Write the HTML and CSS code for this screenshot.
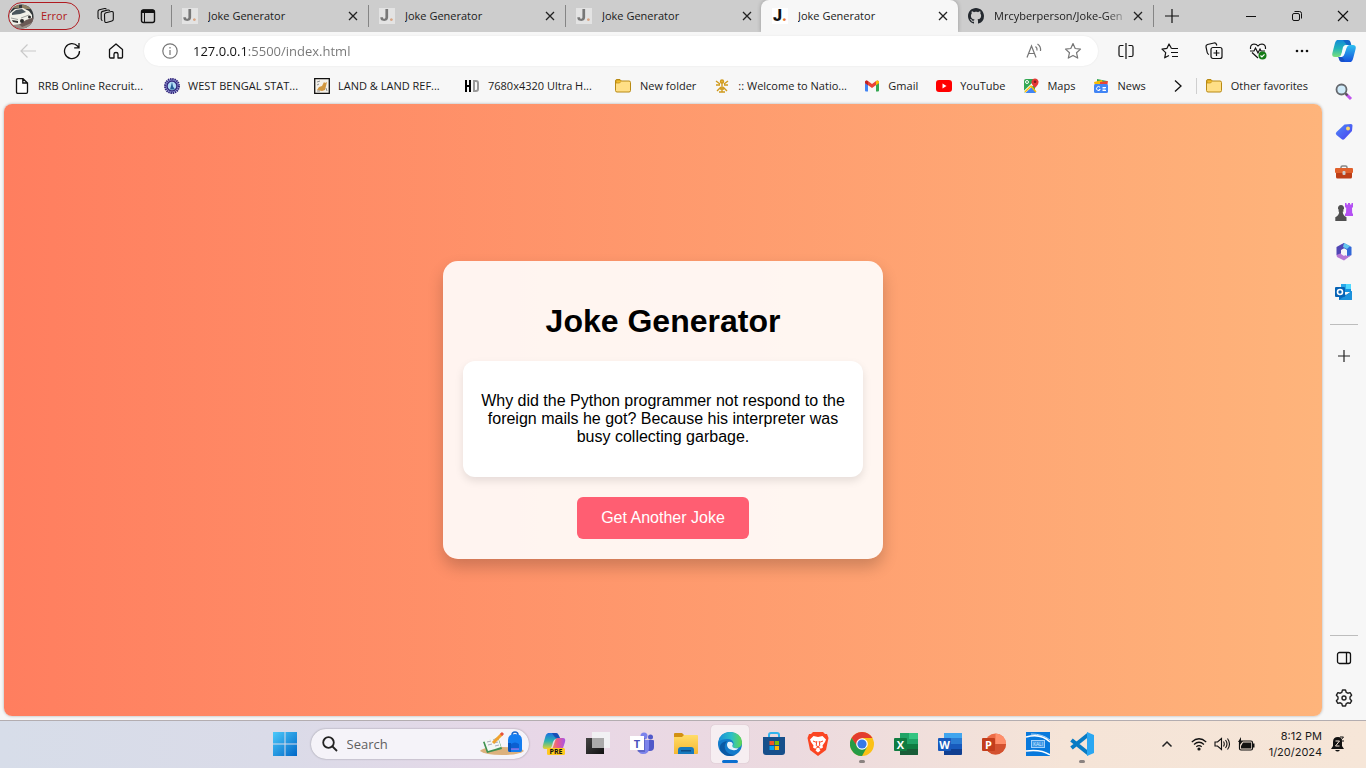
FILE: index.html
```html
<!DOCTYPE html>
<html lang="en">
<head>
<meta charset="utf-8">
<meta name="viewport" content="width=device-width, initial-scale=1">
<title>Joke Generator</title>
<link rel="stylesheet" href="styles.css">
</head>
<body class="desktop">
<svg class="defs" width="0" height="0" aria-hidden="true">
  <defs>
    <symbol id="close" viewBox="0 0 16 16"><path d="M4 4l8 8M12 4l-8 8" stroke="#222" stroke-width="1.3" fill="none"/></symbol>
    <symbol id="folder" viewBox="0 0 18 16"><path d="M1.500 3q0-1.500 1.500-1.500h3l1.500 1.500h7.500q1.500 0 1.500 1.500v8q0 1.500-1.500 1.500h-12q-1.500 0-1.500-1.500z" fill="#ffdf86" stroke="#b88a14"/><path d="M2 5V3q0-1 1-1h3l1 1.500L5.500 5z" fill="#f3bd2c" stroke="#b88a14" stroke-width=".7"/></symbol>
    <linearGradient id="gBlue" x1="0" y1="0" x2="1" y2="1"><stop stop-color="#4cc9fa"/><stop offset="1" stop-color="#0067c7"/></linearGradient>
    <linearGradient id="gCop1" x1="0" y1="0" x2="0" y2="1"><stop stop-color="#1389d8"/><stop offset=".5" stop-color="#21b4b8"/><stop offset="1" stop-color="#7be07a"/></linearGradient>
    <linearGradient id="gCop2" x1="0" y1="0" x2="0" y2="1"><stop stop-color="#2ec0f0"/><stop offset="1" stop-color="#1450dc"/></linearGradient>
    <linearGradient id="gTag" x1="0" y1="0" x2="1" y2="1"><stop stop-color="#4f8cf8"/><stop offset="1" stop-color="#4a3ff0"/></linearGradient>
    <linearGradient id="gEdge" x1="0" y1="0" x2="1" y2="0"><stop stop-color="#1a8fd8"/><stop offset=".55" stop-color="#2bbfc7"/><stop offset="1" stop-color="#62d84e"/></linearGradient>
    <linearGradient id="gPre" x1="0" y1="1" x2="1" y2="1"><stop stop-color="#f7a23b"/><stop offset=".5" stop-color="#ea5a8c"/><stop offset="1" stop-color="#a454e8"/></linearGradient>
    <linearGradient id="gPreL" x1="0" y1="0" x2="0" y2="1"><stop stop-color="#1c6fe0"/><stop offset=".5" stop-color="#2cb3b0"/><stop offset="1" stop-color="#e5d330"/></linearGradient>
    <linearGradient id="gFold" x1="0" y1="0" x2="0" y2="1"><stop stop-color="#ffdc68"/><stop offset="1" stop-color="#f5b731"/></linearGradient>
    <linearGradient id="gBlk" x1="0" y1="0" x2="1" y2="1"><stop stop-color="#444"/><stop offset="1" stop-color="#111"/></linearGradient>
  </defs>
</svg>

<header class="tabstrip">
  <div class="tabstrip-tools">
    <button class="profile"><svg width="25" height="25" viewBox="0 0 25 25" aria-hidden="true"><clipPath id="av"><circle cx="12.500" cy="12.500" r="12"/></clipPath><g clip-path="url(#av)"><path fill="#33383a" d="M0 0h25v25H0z"/><path fill="#8c8063" d="M3 0h7v4H3zM13 1h9v4h-9z"/><path fill="#9a8f88" d="M0 19l25-5v11H0z"/><path fill="#6b5a56" d="M9 19l16-6v5l-12 5z"/><path fill="#f1f1e9" d="M0 10l6-5 8-1 6 3 3 4v3l-6 2-6 4-7 1-4-4z"/><path fill="#4a565c" d="M3 9l4-3 6-1 4 3-6 2-8 1z"/><path d="M2 14l7 1.500M12 14l8-3" stroke="#9da19d" fill="none"/><path fill="#333" d="M3 16l6 1v2l-5-1z"/><circle cx="13" cy="17" r="2" fill="#2b2b2b"/><circle cx="20.500" cy="13" r="1.500" fill="#2b2b2b"/></g></svg>Error</button>
    <button class="tool" aria-label="Workspaces"><svg width="18" height="18" viewBox="0 0 18 18" fill="none" stroke="#111" stroke-width="1.100" stroke-linejoin="round"><path d="M7.500 7.500Q7.600 6 9 5.700l5.500-1.200q1.700-.3 1.800 1.500v6.200q0 1.400-1.400 1.800l-5.200 1.500q-1.900.4-2-1.500z"/><path d="M5.500 13.500q-1.300 0-1.300-1.500V6.200q0-1.400 1.400-1.800L11 3q1.300-.2 1.700.8"/><path d="M2.200 11.800Q1 11.600 1 10.200V4.600Q1 3.200 2.400 2.800L7.600 1.500Q9 1.200 9.300 2.300"/></svg></button>
    <button class="tool" aria-label="Tab actions"><svg width="16" height="16" viewBox="0 0 16 16"><rect x="1.500" y="2" width="13" height="12.500" rx="2" fill="none" stroke="#111" stroke-width="1.400"/><path d="M1.500 5V3.500q0-2 2-2h9q2 0 2 2V5z" fill="#111"/><path d="M4.500 5v9" stroke="#111"/></svg></button>
  </div>
  <div class="tab"><span class="favicon faded" aria-hidden="true">J<i>.</i></span><button class="tab-title">Joke Generator</button><button class="close" aria-label="Close tab"><svg width="16" height="16"><use href="#close"/></svg></button></div>
  <div class="tab"><span class="favicon faded" aria-hidden="true">J<i>.</i></span><button class="tab-title">Joke Generator</button><button class="close" aria-label="Close tab"><svg width="16" height="16"><use href="#close"/></svg></button></div>
  <div class="tab"><span class="favicon faded" aria-hidden="true">J<i>.</i></span><button class="tab-title">Joke Generator</button><button class="close" aria-label="Close tab"><svg width="16" height="16"><use href="#close"/></svg></button></div>
  <div class="tab active"><span class="favicon" aria-hidden="true">J<i>.</i></span><button class="tab-title">Joke Generator</button><button class="close" aria-label="Close tab"><svg width="16" height="16"><use href="#close"/></svg></button></div>
  <div class="tab last"><svg width="16" height="16" viewBox="0 0 16 16" aria-hidden="true"><path fill="#24292f" d="M8 0C3.580 0 0 3.580 0 8c0 3.540 2.290 6.530 5.470 7.590.4.070.550-.170.550-.380 0-.190-.010-.820-.010-1.490-2.010.370-2.530-.490-2.690-.940-.090-.230-.480-.940-.820-1.130-.280-.150-.680-.520-.010-.530.630-.010 1.080.580 1.230.820.720 1.210 1.870.870 2.330.660.070-.520.280-.870.510-1.070-1.780-.2-3.640-.890-3.640-3.950 0-.870.310-1.590.820-2.150-.080-.2-.360-1.020.080-2.120 0 0 .670-.210 2.200.820.640-.180 1.320-.270 2-.270s1.360.090 2 .270c1.530-1.040 2.200-.820 2.200-.820.440 1.100.160 1.920.080 2.120.510.560.820 1.270.820 2.150 0 3.070-1.870 3.750-3.650 3.950.290.250.540.730.540 1.480 0 1.070-.010 1.930-.010 2.200 0 .210.150.460.550.380A8.010 8.010 0 0 0 16 8c0-4.420-3.580-8-8-8z"/></svg><button class="tab-title fade">Mrcyberperson/Joke-Gen</button><button class="close" aria-label="Close tab"><svg width="16" height="16"><use href="#close"/></svg></button></div>
  <button class="newtab" aria-label="New tab"><svg width="16" height="16"><path d="M8 1v14M1 8h14" stroke="#111" stroke-width="1.200"/></svg></button>
  <div class="window-controls">
    <button aria-label="Minimize"><svg width="12" height="12"><path d="M1 6.500h10" stroke="#111"/></svg></button>
    <button aria-label="Restore"><svg width="12" height="12" fill="none" stroke="#111"><rect x="1.500" y="3.500" width="7" height="7" rx="1.500"/><path d="M3.500 1.500h5q2 0 2 2v5"/></svg></button>
    <button aria-label="Close window"><svg width="12" height="12"><path d="M1 1l10 10M11 1L1 11" stroke="#111" stroke-width="1.200"/></svg></button>
  </div>
</header>

<div class="toolbar">
  <div class="slots">
    <button class="slot" aria-label="Back"><svg width="18" height="18" fill="none" stroke="#c9c9c9" stroke-width="1.200"><path d="M17 9H2M8.500 2.500L2 9l6.500 6.500"/></svg></button>
    <button class="slot" aria-label="Refresh"><svg width="18" height="18" fill="none" stroke="#111" stroke-width="1.300"><path d="M16.500 9A7.500 7.500 0 1 1 14.500 4L16 5.800M16 1v4.800h-4.800"/></svg></button>
    <button class="slot" aria-label="Home"><svg width="16" height="18" fill="none" stroke="#111" stroke-width="1.300" stroke-linejoin="round"><path d="M1.500 7.500L8 2l6.500 5.500V15q0 1-1 1H10v-4q0-1.500-2-1.500T6 12v4H2.500q-1 0-1-1z"/></svg></button>
  </div>
  <div class="address">
    <svg width="16" height="16" fill="none" stroke="#777" stroke-width="1.200" aria-hidden="true"><circle cx="8" cy="8" r="7.200"/><path d="M8 7v5M8 4v1.500"/></svg>
    <input class="url" type="text" aria-label="Address" value="127.0.0.1:5500/index.html">
    <button class="inpill" aria-label="Read aloud"><svg width="16" height="16" fill="none" stroke="#777" stroke-width="1.200"><path d="M1 14.500L5.500 3 10 14.500M2.700 10.500h5.800M9.500 3.500q2 1.500 1.500 4M11.500 1q3.700 2.500 3 7"/></svg></button>
    <button class="inpill" aria-label="Favorite"><svg width="18" height="18" fill="none" stroke="#777" stroke-width="1.200" stroke-linejoin="round"><path d="M9 1.500l2.200 5 5.300.6-4 3.600 1.200 5.400L9 13.400l-4.700 2.700 1.200-5.400-4-3.600 5.300-.6z"/></svg></button>
  </div>
  <div class="slots">
    <button class="slot" aria-label="Split screen"><svg width="18" height="18" fill="none" stroke="#111" stroke-width="1.200"><path d="M6.500 3.500h-3Q2 3.500 2 5v8q0 1.500 1.500 1.500h3M11.500 3.500h3Q16 3.500 16 5v8q0 1.500-1.500 1.500h-3M9 1v16"/></svg></button>
    <button class="slot" aria-label="Favorites"><svg width="18" height="18" fill="none" stroke="#111" stroke-width="1.200" stroke-linejoin="round"><path d="M10.500 6.500L8 2 6 6.300l-5 .8 3.700 3.500-1 5.200L8 13.500M10.500 6.500H17M10 10.500h7M11 14.500h6"/></svg></button>
    <button class="slot" aria-label="Collections"><svg width="18" height="18" fill="none" stroke="#111" stroke-width="1.200"><rect x="6" y="5.500" width="11" height="11" rx="2"/><path d="M11.500 8v6M8.500 11h6M4 12.500Q2.500 12 2.200 10.500L1 5Q.7 3 2.500 2.500L9 1q2-.3 2.500 1.500l.3 1"/></svg></button>
    <button class="slot" aria-label="Browser essentials"><svg width="18" height="18" fill="none" stroke="#111" stroke-width="1.200"><path d="M1.500 7Q1 2.500 5 2q2.500 0 4 2 1.500-2 4-2 4 .5 3.500 5M1 9h4l1.500-3 2.500 5 2-4 1 2h4M3 10.500L9 16"/><circle cx="13.500" cy="13.500" r="4" fill="#157c16" stroke="none"/><path d="M11.500 13.500l1.400 1.400 2.600-2.600" stroke="#fff"/></svg></button>
    <button class="slot" aria-label="Settings and more"><svg width="16" height="6" fill="#111"><circle cx="3" cy="3" r="1.300"/><circle cx="8" cy="3" r="1.300"/><circle cx="13" cy="3" r="1.300"/></svg></button>
    <button class="slot copilot" aria-label="Copilot"><svg width="24" height="24" viewBox="0 0 24 24"><path fill="url(#gCop1)" d="M5 1h9q2 0 2.500 2l1 3h-3q-2 0-3 3l-2 6q-1 3-3 3H3q-3.500 0-2.600-4L3 4q.6-2 2-3z"/><path fill="#1267c9" d="M11 1h5q2 0 2.500 2l.8 3H16q-2 0-2.600-2z"/><path fill="url(#gCop2)" d="M19 23h-9q-2 0-2.500-2l-1-3h3q2 0 3-3l2-6q1-3 3-3H21q3.500 0 2.600 4L21 20q-.6 2-2 3z"/><path fill="#164fc3" d="M13 22.500H9Q7.500 22 7 20l-.7-2H9q2 0 2.600 2z"/><path fill="#f4fbff" d="M11 8q1-2 3-2h2q-1.500 1-2 3l-2 6q-1 3-3 3H8q1-1 1.500-3z"/></svg></button>
  </div>
</div>

<div class="browser-body">
  <main class="content">
    <nav class="bookmarks" aria-label="Favorites bar">
      <a class="bookmark long" href="#"><svg width="16" height="16" fill="#fff" stroke="#111" stroke-width="1.300"><path d="M2.500 2q0-1.300 1.300-1.300H9L13.500 5v9q0 1.300-1.300 1.300H3.800q-1.300 0-1.300-1.300zM8.800.8V5h4.500"/></svg><span>RRB Online Recruit...</span></a>
      <a class="bookmark long" href="#"><svg width="16" height="16"><circle cx="8" cy="8" r="7" fill="#a6b4ea" stroke="#33277d" stroke-width="2" stroke-dasharray="1.500 .7"/><circle cx="8" cy="8" r="5" fill="#b2dcf4" stroke="#33277d" stroke-width="1.500"/><path d="M8 4l-1 4-1 3.500h5L9 8.500z" fill="#245d98"/></svg><span>WEST BENGAL STAT...</span></a>
      <a class="bookmark long" href="#"><svg width="16" height="16"><path d="M.7.700h14.600v14.600H.7z" fill="#f4f1ea" stroke="#111" stroke-width="1.300"/><path d="M3 12l2-3 3-1 2-4 1 1 2-1-1 4-1 4-3 1z" fill="#d1973f"/><path d="M3 4l3-1M3 7l2-1M12 10l1 3M3 13h3" stroke="#8f8f8f"/></svg><span>LAND &amp; LAND REF...</span></a>
      <a class="bookmark long" href="#"><svg width="16" height="16" fill="none"><path d="M2 2v12M6 2v12M2 8h4" stroke="#000" stroke-width="2"/><path d="M10 3h2q2 0 2 2v6q0 2-2 2h-2z" stroke="#999" stroke-width="2"/></svg><span>7680x4320 Ultra H...</span></a>
      <a class="bookmark" href="#"><svg width="18" height="16"><use href="#folder"/></svg><span>New folder</span></a>
      <a class="bookmark long" href="#"><svg width="16" height="16" fill="none" stroke="#d09a1c" stroke-width="1.400"><path d="M8 5v9M2 3l4 3M14 3l-4 3M2 7h4M14 7h-4M3 13l4-4M13 13L9 9M5 14h6M6 11h4"/><circle cx="8" cy="3.500" r="1.500" fill="#edbd42"/></svg><span>:: Welcome to Natio...</span></a>
      <a class="bookmark" href="#"><svg width="16" height="16"><path fill="#4285f4" d="M1 4.500l3 2.500v6.500H2q-1 0-1-1z"/><path fill="#34a853" d="M15 4.500L12 7v6.500h2q1 0 1-1z"/><path fill="#ea4335" d="M1 5V4q.5-2.500 3-1l4 3 4-3q2.500-1.500 3 1v1L8 10z"/><path fill="#fbbc04" d="M12 3q2.500-1.500 3 1v1l-3 2.200z"/><path fill="#c5221f" d="M1 4q.5-2.500 3-1v4.200L1 5z"/></svg><span>Gmail</span></a>
      <a class="bookmark" href="#"><svg width="16" height="16"><rect y="2" width="16" height="12" rx="3" fill="#f00"/><path d="M6.500 5.500v5l4-2.500z" fill="#fff"/></svg><span>YouTube</span></a>
      <a class="bookmark" href="#"><svg width="16" height="16"><path fill="#34a853" d="M1 3q0-2 2-2h9v14H3q-2 0-2-2z"/><path fill="#4285f4" d="M2 14.500l6-6 5 6.500H3z"/><path d="M1.500 14L12 4" stroke="#fff" stroke-width="2.500"/><path d="M2 14l6-6 5 6" stroke="#fbbc04" stroke-width="1.500" fill="none"/><path fill="#e53935" d="M12 10Q8 6 8.500 3.500 9.200.500 12 .500t3.500 3Q16 6 12 10z"/><circle cx="12" cy="3.800" r="1.300" fill="#7b1c1c"/><circle cx="4" cy="4" r="1.500" fill="none" stroke="#fff"/></svg><span>Maps</span></a>
      <a class="bookmark" href="#"><svg width="16" height="16"><path fill="#34a853" d="M4 1l10 2v5H4z"/><path fill="#fbbc04" d="M1 4l8-2 2 6H2z"/><path fill="#ea4335" d="M7 4l8-1-1 6H7z"/><rect x="1" y="6" width="14" height="9" rx="1.500" fill="#4285f4"/><path d="M7 9.200a2 2 0 1 0 .3 2.300H5.800M9.500 9.500h3.500M9.500 11h3M9.500 12.500h3.500" stroke="#fff" fill="none"/></svg><span>News</span></a>
      <button class="more" aria-label="More favorites"><svg width="10" height="14" fill="none" stroke="#111" stroke-width="1.300"><path d="M2 1.500L8 7l-6 5.500"/></svg></button>
      <a class="bookmark other" href="#"><svg width="18" height="16"><use href="#folder"/></svg><span>Other favorites</span></a>
    </nav>
    <section class="page">
      <article class="card">
        <h1>Joke Generator</h1>
        <div class="joke"><p>Why did the Python programmer not respond to the foreign mails he got? Because his interpreter was busy collecting garbage.</p></div>
        <button class="another">Get Another Joke</button>
      </article>
    </section>
  </main>
  <aside class="sidebar">
    <button aria-label="Search"><svg width="18" height="18"><path d="M11 11l5 5" stroke="#c154ee" stroke-width="3"/><path d="M10 10l2.500 2.500" stroke="#555" stroke-width="2"/><circle cx="6.500" cy="6.500" r="5" fill="#cfeaf9" stroke="#66696e" stroke-width="1.800"/></svg></button>
    <button aria-label="Shopping"><svg width="18" height="18"><path d="M9.500 1.500L16 1q1.500 0 1.500 1.500L17 8l-7.500 8q-1.500 1.500-3 0L1.500 12q-1.500-1.500 0-3z" fill="url(#gTag)"/><circle cx="13" cy="5.500" r="2" fill="#f9d76b"/></svg></button>
    <button aria-label="Tools"><svg width="18" height="18"><path d="M6 6V4.500Q6 3 7.500 3h3Q12 3 12 4.500V6" fill="none" stroke="#858585" stroke-width="1.500"/><rect y="5" width="18" height="5" rx="1" fill="#e0602b"/><path d="M1 10h16v4q0 1.500-1.500 1.500h-13Q1 15.500 1 14z" fill="#bd3e16"/><rect x="7.500" y="8" width="3" height="4" rx="1" fill="#ccc"/></svg></button>
    <button aria-label="Games"><svg width="18" height="18"><path fill="#b450f3" d="M10 0h1.500v1.500H13V0h2v1.500h1.500V0H18v4l-1 1 .2 5 .8 1v2h-8v-2l1-1 .2-5-1.200-1z"/><path fill="#505050" d="M6 2a3 3 0 0 1 2 5.300l1 .8-1.300.7q.2 3.500 3.800 5.500V18H.3v-3.700Q4 12.500 4.200 8.800L3 8.100l1-.8A3 3 0 0 1 6 2z"/></svg></button>
    <button aria-label="Microsoft 365"><svg width="18" height="18"><path fill="#3169d8" d="M9 0l7.500 4v8L12 14.700V7L5 3z"/><path fill="#5146b4" d="M1.500 4L6 1.500 9 0l3 4-6 3v6L1.500 12z"/><path fill="#b777d5" d="M1.500 12l5-2 5.500 3 4.500-1L9 17.500 2 14z"/><path fill="#65c7ef" d="M9 0l6 3-3 3-4-2z"/><path fill="#f7f7f7" d="M9 5.500l3 2v3.500l-3 2-3-2V7.500z"/></svg></button>
    <button aria-label="Outlook"><svg width="18" height="18"><path fill="#1490df" d="M6 1h9q1 0 1 1v7H6z"/><path fill="#28a8ea" d="M6 1h5v5H6z"/><path fill="#50d9ff" d="M11 1h5v5h-5z"/><path fill="#0a6cbd" d="M4 8l7 4 6-4v8q0 1-1 1H4z"/><path fill="#1c91dc" d="M17 8v8q0 1-1 1H4z"/><rect y="4" width="10" height="10" rx="1" fill="#0663b5"/><circle cx="5" cy="9" r="2.500" fill="none" stroke="#fff" stroke-width="1.600"/></svg></button>
    <hr>
    <button aria-label="Customize"><svg width="14" height="14"><path d="M7 1v12M1 7h12" stroke="#222" stroke-width="1.200"/></svg></button>
    <hr class="push">
    <button aria-label="Hide sidebar"><svg width="16" height="16" fill="none" stroke="#111" stroke-width="1.300"><rect x="1.500" y="2.500" width="13" height="11" rx="2"/><path d="M10.500 2.500v11"/></svg></button>
    <button aria-label="Settings"><svg width="18" height="18" fill="none" stroke="#222" stroke-width="1.400" stroke-linejoin="round"><path d="M7.500 1h3l.7 2.300 1.600.9 2.300-.6 1.500 2.600L15 8v2l1.600 1.800-1.500 2.600-2.300-.6-1.600.9-.7 2.300h-3l-.7-2.300-1.600-.9-2.300.6-1.500-2.600L3 10V8L1.400 6.200l1.500-2.600 2.300.6 1.600-.9z"/><circle cx="9" cy="9" r="2"/></svg></button>
  </aside>
</div>

<footer class="taskbar">
  <div class="apps">
    <button class="app" aria-label="Start"><svg width="24" height="24" fill="url(#gBlue)"><path d="M0 0h11.500v11.500H0zM12.500 0H24v11.500H12.500zM0 12.500h11.500V24H0zM12.500 12.500H24V24H12.500z"/></svg></button>
    <div class="search">
      <svg width="16" height="16" fill="none" stroke="#222" stroke-width="1.800" aria-hidden="true"><circle cx="6.500" cy="6.500" r="5.300"/><path d="M10.500 10.500L15 15"/></svg>
      <input type="search" placeholder="Search" aria-label="Search">
      <svg width="44" height="26" aria-hidden="true"><path fill="#dcb17d" d="M0 20q3-4 22-4t22 4q-5 4-22 4T0 20z"/><path fill="#3f9150" d="M3 11l15-5 4 12-15 4z"/><path fill="#f4f7f5" d="M4 9l7-1 6-4 4 12-6 2-7 2z"/><path d="M7 11l4-1M8 14l4-1M13 9l4-2M14 12l4-1M15 15l4-1" stroke="#aab"/><path d="M13 12l9-9" stroke="#f0a22f" stroke-width="3"/><path d="M21 4l2-2" stroke="#e7503d" stroke-width="3"/><path fill="none" stroke="#1767cc" stroke-width="1.500" d="M32 4q0-3 3-3t3 3"/><path fill="#147df0" d="M28 9q0-6 7-6t7 6v10q0 2-2 2H30q-2 0-2-2z"/><path fill="#0753bd" d="M28 12h3v9h-1q-2 0-2-2z"/><path d="M31 13q4-3 8 0v5h-8z" fill="#0b5fd1"/><path d="M31 18h8" stroke="#c87bf0"/></svg>
    </div>
    <button class="app" aria-label="Copilot preview"><svg width="24" height="24"><path fill="url(#gPreL)" d="M6 1h8q2 0 3 3l1 3h-4q-2 0-3 3l-1 4q-1 3-3 3H3q-3 0-2-4L3.500 4Q4 2 6 1z"/><path fill="#194eb6" d="M10 1h4q2 0 3 3l1 2h-3q-2 0-3-2z"/><path fill="url(#gPre)" d="M16 6h5q3 0 2 4l-2 6q-1 3-3 3H8l2-1 3-9q.7-3 3-3z"/><rect x="5" y="16" width="18" height="7" rx="1.500" fill="#ffc91f"/><text x="14" y="22" class="label-pre">PRE</text></svg></button>
    <button class="app" aria-label="Task view"><svg width="24" height="24"><path fill="url(#gBlk)" d="M0 6h18v16H0z"/><path fill="#f1f1f3" d="M6 0h18v16H6z"/><path fill="#aaa" d="M6 6h12v10H6z"/></svg></button>
    <button class="app" aria-label="Teams"><svg width="24" height="24"><circle cx="20.500" cy="5" r="2.500" fill="#5059c9"/><circle cx="14" cy="4" r="3.500" fill="#7b83eb"/><path fill="#5059c9" d="M17 8h6q1 0 1 1v6q0 4-4 4h-2z"/><path fill="#7b83eb" d="M8 8h11v8q0 6-6 6-5 0-5.500-6z"/><path fill="#414aa5" d="M2 6h13v14H8z" opacity=".5"/><path fill="#fff" d="M0 4h14v14H0z"/><text x="7" y="15.500" class="label-app teams">T</text></svg></button>
    <button class="app" aria-label="File Explorer"><svg width="24" height="24"><path fill="#d29012" d="M0 2q0-1 1-1h7l3 3v3H0z"/><path fill="url(#gFold)" d="M0 5h8l2-2h13q1 0 1 1v17q0 1-1 1H0z"/><path fill="#1679bd" d="M4 22v-4q0-3 3-3h10q3 0 3 3v4z"/><path fill="#0d4d83" d="M7 18h10v1.500H7z"/></svg></button>
    <button class="app current" aria-label="Microsoft Edge"><svg width="24" height="24"><circle cx="12" cy="12" r="12" fill="#147bcb"/><path fill="url(#gEdge)" d="M.5 10Q2 0 12 0q11 .5 12 10 0 6-6 6-4 0-4-2 2-1 1.500-3-1-4-6-4Q3 7 .500 10z"/><path fill="#0c59a4" d="M9 9q-4 5-1 10 3 4 9 4-5 2-10 0-6-4-5-9 1-4 7-5z"/><path fill="#e7f2fb" d="M10 10q4-1 5 2-1 1-.500 3 2 2 6 1-2 3-6 2-6-1-5.500-6z"/></svg></button>
    <button class="app" aria-label="Microsoft Store"><svg width="24" height="24"><path d="M7 6V3q0-2 2-2h6q2 0 2 2v3" fill="none" stroke="#31b4ee" stroke-width="2"/><path fill="#164f8b" d="M1 5h22v15q0 3-3 3H4q-3 0-3-3z"/><path fill="#f35325" d="M7.500 9H12v4H7.500z"/><path fill="#81bc06" d="M12.700 9H17v4h-4.300z"/><path fill="#05a6f0" d="M7.500 14H12v4H7.500z"/><path fill="#ffba08" d="M12.700 14H17v4h-4.300z"/></svg></button>
    <button class="app" aria-label="Brave"><svg width="24" height="24"><path fill="#fb4522" d="M7 0h10l2 2h2l1.500 4L20 18l-8 6-8-6L1.500 6 3 2h2z"/><path fill="#fff" d="M7.500 4l4.500 1 4.500-1L20 7.500l-1 2.500-2.500 3.500.5 2-3.500 2 1 1L12 20.500 9.500 18.500l1-1-3.500-2 .5-2L5 10 4 7.500z"/><path d="M7 9l3 1.200M17 9l-3 1.200M10.800 9l-.6 4.500L12 14.700l1.800-1.200-.6-4.500M9.500 16.500L12 15l2.500 1.500" stroke="#fb4522" fill="none"/></svg></button>
    <button class="app running" aria-label="Chrome"><svg width="24" height="24"><circle cx="12" cy="12" r="12" fill="#fbc116"/><path fill="#e33b2e" d="M1.600 6A12 12 0 0 1 22.400 6H12L7 15z"/><path fill="#269b46" d="M1.600 6A12 12 0 0 0 12 24l5-9-5 2-5-3z"/><circle cx="12" cy="12" r="5.800" fill="#fff"/><circle cx="12" cy="12" r="4.600" fill="#3679e5"/></svg></button>
    <button class="app" aria-label="Excel"><svg width="24" height="24"><path fill="#21a366" d="M6 1h18v22H6z"/><path fill="#33c481" d="M15 1h9v6h-9z"/><path fill="#107c41" d="M6 12h18v6H6z"/><path fill="#185c37" d="M6 17h18v5q0 1-1 1H6z"/><rect y="6" width="13" height="13" rx="1" fill="#107c41"/><text x="6.500" y="16.500" class="label-app">X</text></svg></button>
    <button class="app" aria-label="Word"><svg width="24" height="24"><path fill="#41a5ee" d="M6 1h18v6H6z"/><path fill="#2b7cd3" d="M6 6h18v6H6z"/><path fill="#185abd" d="M6 12h18v6H6z"/><path fill="#103f91" d="M6 17h18v5q0 1-1 1H6z"/><rect y="6" width="13" height="13" rx="1" fill="#185abd"/><text x="6.500" y="16.500" class="label-app">W</text></svg></button>
    <button class="app" aria-label="PowerPoint"><svg width="24" height="24"><circle cx="13.500" cy="12" r="10.500" fill="#ed6c47"/><path fill="#ff8f6b" d="M13.500 1.500A10.500 10.500 0 0 1 24 12H13.500z"/><path fill="#d35230" d="M3 12h21A10.500 10.500 0 0 1 3 12z"/><rect y="6" width="13" height="13" rx="1" fill="#c43e1c"/><text x="6.500" y="16.500" class="label-app">P</text></svg></button>
    <button class="app" aria-label="Kali Linux"><svg width="24" height="24"><path fill="#0879dc" d="M0 0h24v24H0z"/><path d="M0 5q15-4 24 5M0 19q15-2 24 4" stroke="#fff" stroke-width="1.500" fill="none"/><path d="M5 2q12 0 19 6" stroke="#b8ddfa" fill="none"/><rect x="5.500" y="8.500" width="13" height="7" fill="#3c96e5" stroke="#a5d2fa"/><text x="12" y="14" class="label-kali">KALI</text></svg></button>
    <button class="app running" aria-label="Visual Studio Code"><svg width="24" height="24"><path d="M1.500 8L19 22M1.500 16L19 2" stroke="#087bc4" stroke-width="4"/><path fill="#2aa7f2" d="M17 0l7 3v18l-7 3V0z"/></svg></button>
  </div>
  <div class="tray">
    <button class="chevron" aria-label="Hidden icons"><svg width="12" height="8" fill="none" stroke="#222" stroke-width="1.500"><path d="M1.500 6.500L6 2l4.500 4.500"/></svg></button>
    <button class="status" aria-label="Network, sound, battery">
      <svg width="16" height="14" fill="none" stroke="#111" stroke-width="1.200"><path d="M.8 5Q8-1.500 15.200 5M3 7.500q5-4.500 10 0M5.300 9.800q2.700-2.300 5.400 0"/><circle cx="8" cy="12" r="1" fill="#111"/></svg>
      <svg width="17" height="14" fill="none" stroke="#111" stroke-width="1.100"><path d="M1 5h2.500L7.500 1.500v11L3.500 9H1zM9.500 4.500q1.500 2.500 0 5M11.500 3q3 4 0 8M13.500 1.500q4 5.500 0 11"/></svg>
      <svg width="17" height="14"><rect x="1.500" y="4" width="13" height="9" rx="1.500" fill="none" stroke="#111" stroke-width="1.200"/><path fill="#111" d="M5 5.500h8.200v6H3V9zM15 6.500h1.500v4H15zM3 0L0 5h2l-1 4 4-5H3z"/></svg>
    </button>
    <button class="clock"><time>8:12 PM</time><time>1/20/2024</time></button>
    <button class="bell" aria-label="Notifications"><svg width="16" height="16"><path fill="#111" d="M8 1q-5 0-5 5v4L1 13h13l-2-3V6Q12 1 8 1zM5 14h5q-2.500 3-5 0z"/><path d="M5.500 5h4l-4 5h4" stroke="#f5e4d7" fill="none"/><path d="M10 1h3.500L10 5h4" stroke="#111" fill="none"/></svg></button>
  </div>
</footer>
</body>
</html>
```
FILE: styles.css
```css
* { box-sizing: border-box; }

.desktop {
  margin: 0;
  min-height: 100vh;
  display: flex;
  flex-direction: column;
  background: #f7f7f7;
  color: #1b1b1b;
  font: 11px/16px "Open Sans", "Noto Sans", sans-serif;
}

.defs { display: none; }

.desktop svg { display: block; flex: none; }

.desktop button {
  display: flex;
  align-items: center;
  justify-content: center;
  padding: 0;
  border: 0;
  background: none;
  color: inherit;
  font: inherit;
}

/* Tab strip */
.tabstrip {
  display: flex;
  height: 32px;
  background: #cdcdcd;
}

.tabstrip-tools {
  display: flex;
  align-items: center;
  width: 171px;
  padding-left: 8px;
}

.desktop .profile {
  justify-content: flex-start;
  gap: 7px;
  width: 72px;
  height: 28px;
  margin-right: 5px;
  border: 1px solid #b01b20;
  border-radius: 14px;
  color: #b01b20;
  font-size: 11px;
}

.tool { width: 42px; height: 28px; }

.tab {
  display: flex;
  align-items: center;
  flex: 0 1 197px;
  min-width: 0;
  padding: 0 7px 0 10px;
  position: relative;
  border-left: 1px solid transparent;
  border-image: linear-gradient(transparent 6px, #858585 6px, #858585 26px, transparent 26px) 1;
}

.tab.active {
  margin-left: -1px;
  border-image: none;
  border-radius: 8px 8px 0 0;
  background: #f7f7f7;
  box-shadow: 0 0 4px rgba(0, 0, 0, 0.25);
  clip-path: inset(0 -4px 0 -4px);
}

.tab.last {
  flex-basis: 195px;
  padding-left: 9px;
  border-image: none;
}

.favicon {
  width: 16px;
  height: 16px;
  flex: none;
  background: #fff;
  color: #111;
  font: 900 16px/16px Roboto, "Liberation Sans", sans-serif;
  text-align: center;
}

.favicon i { color: #e8772e; font-style: normal; }

.faded { opacity: 0.45; }

.desktop .tab-title {
  flex: 1;
  min-width: 0;
  justify-content: flex-start;
  margin-left: 10px;
  overflow: hidden;
  white-space: nowrap;
}

.fade { mask-image: linear-gradient(to right, #000 82%, transparent); }

.close { width: 16px; height: 16px; }

.desktop .newtab {
  width: 36px;
  border-left: 1px solid transparent;
  border-image: linear-gradient(transparent 6px, #858585 6px, #858585 26px, transparent 26px) 1;
}

.window-controls { display: flex; margin-left: auto; }

.window-controls button { width: 46px; }

/* Toolbar */
.toolbar {
  display: flex;
  align-items: center;
  height: 38px;
  padding: 0 2px 0 6px;
}

.slots { display: flex; }

.slot { width: 44px; height: 30px; }

.copilot { width: 40px; }

.address {
  display: flex;
  align-items: center;
  flex: 1;
  height: 30px;
  margin: 0 6px;
  padding: 0 6px 0 18px;
  border-radius: 15px;
  background: #fff;
  box-shadow: 0 0 2px rgba(0, 0, 0, 0.08);
}

.url {
  flex: 1;
  min-width: 0;
  margin-left: 15px;
  padding: 0;
  border: 0;
  background: linear-gradient(to right, #111 54px, #757575 54px) text;
  color: transparent;
  font: 13px/20px "Open Sans", "Noto Sans", sans-serif;
}

.inpill { width: 39px; height: 28px; }

/* Page column and sidebar */
.browser-body {
  display: flex;
  flex: 1;
}

.content {
  display: flex;
  flex-direction: column;
  flex: 1;
  min-width: 0;
  padding: 0 0 4px 4px;
}

.bookmarks {
  display: flex;
  align-items: center;
  height: 34px;
  padding: 0 14px 2px 10px;
  white-space: nowrap;
}

.bookmark {
  display: flex;
  align-items: center;
  flex: none;
  gap: 8px;
  margin-right: 18px;
  color: inherit;
  text-decoration: none;
}

.bookmark.long { width: 132px; }

.more { width: 17px; height: 24px; margin-left: auto; }

.other {
  margin: 0 0 0 9px;
  padding-left: 8px;
  border-left: 1px solid #cfcfcf;
}

.page {
  display: flex;
  flex: 1;
  align-items: center;
  justify-content: center;
  border-radius: 8px;
  background: linear-gradient(to right, #ff7e5f, #feb47b);
  box-shadow: 0 0 3px rgba(0, 0, 0, 0.3);
  color: #000;
  font: 16px/18px "Liberation Sans", Arial, sans-serif;
}

.card {
  display: flex;
  flex-direction: column;
  align-items: center;
  width: 100%;
  max-width: 440px;
  padding: 20px;
  border-radius: 15px;
  background: rgba(255, 255, 255, 0.9);
  box-shadow: 0 8px 16px rgba(0, 0, 0, 0.2);
  text-align: center;
}

.card h1 {
  margin: 22px 0;
  font-size: 32px;
  line-height: 36px;
}

.joke {
  align-self: stretch;
  margin-bottom: 20px;
  padding: 15px;
  border-radius: 12px;
  background: #fff;
  box-shadow: 0 4px 8px rgba(0, 0, 0, 0.1);
}

.joke p { margin: 16px 0; }

.desktop .another {
  padding: 12px 24px;
  border-radius: 6px;
  background: #ff5e72;
  color: #fff;
}

.sidebar {
  display: flex;
  flex-direction: column;
  align-items: center;
  width: 44px;
  padding: 2px 0;
}

.sidebar button { width: 40px; height: 40px; }

.sidebar hr {
  width: 28px;
  margin: 12px 0 11px;
  border: 0;
  border-top: 1px solid #bdbdbd;
}

.sidebar .push { margin: auto 0 2px; }

/* Taskbar */
.taskbar {
  display: grid;
  grid-template-columns: 1fr auto 1fr;
  height: 48px;
  background: linear-gradient(to right, #d7dde9, #dadbe8 20%, #e8d7e7 40%, #ecdadf 58%, #f5e4d7 78%, #f6e6d8);
  box-shadow: inset 0 1px #b3adb0;
}

.apps { display: flex; grid-column: 2; align-items: center; }

.desktop .app {
  position: relative;
  width: 38px;
  height: 38px;
  margin: 0 3px;
  border-radius: 4px;
}

.desktop .current {
  background: rgba(255, 255, 255, 0.55);
  box-shadow: 0 0 1px rgba(0, 0, 0, 0.25);
}

.app.current::after,
.app.running::after {
  content: "";
  position: absolute;
  bottom: 0;
  left: 11px;
  width: 16px;
  height: 3px;
  border-radius: 2px;
  background: #0a6fd0;
}

.app.running::after { left: 16px; width: 6px; background: #8a8280; }

.search {
  display: flex;
  align-items: center;
  width: 218px;
  height: 30px;
  margin: 0 3px 0 4px;
  padding: 0 5px 0 11px;
  border-radius: 15px;
  background: #f5f3f9;
  box-shadow: 0 0 2px rgba(0, 0, 0, 0.35);
}

.search input {
  flex: 1;
  min-width: 0;
  margin-left: 9px;
  padding: 0;
  border: 0;
  background: none;
  color: #555;
  font: 13px/20px "Open Sans", "Noto Sans", sans-serif;
}

.search input::placeholder { color: #606060; }

.label-app {
  fill: #fff;
  font: bold 11px "Open Sans", sans-serif;
  text-anchor: middle;
}

.teams { fill: #4b53bc; }

.label-pre {
  fill: #111;
  font: bold 7px "Open Sans", sans-serif;
  text-anchor: middle;
}

.label-kali {
  fill: #d6ecff;
  font: 5px "Open Sans", sans-serif;
  text-anchor: middle;
}

.tray {
  display: flex;
  align-items: center;
  justify-content: flex-end;
  padding-right: 20px;
}

.chevron { width: 24px; height: 32px; }

.desktop .status { gap: 7px; margin: 0 14px 0 12px; }

.desktop .clock {
  flex-direction: column;
  align-items: flex-end;
  font: 11px/16px Inter, "Open Sans", sans-serif;
}

.bell { margin-left: 8px; }
```
